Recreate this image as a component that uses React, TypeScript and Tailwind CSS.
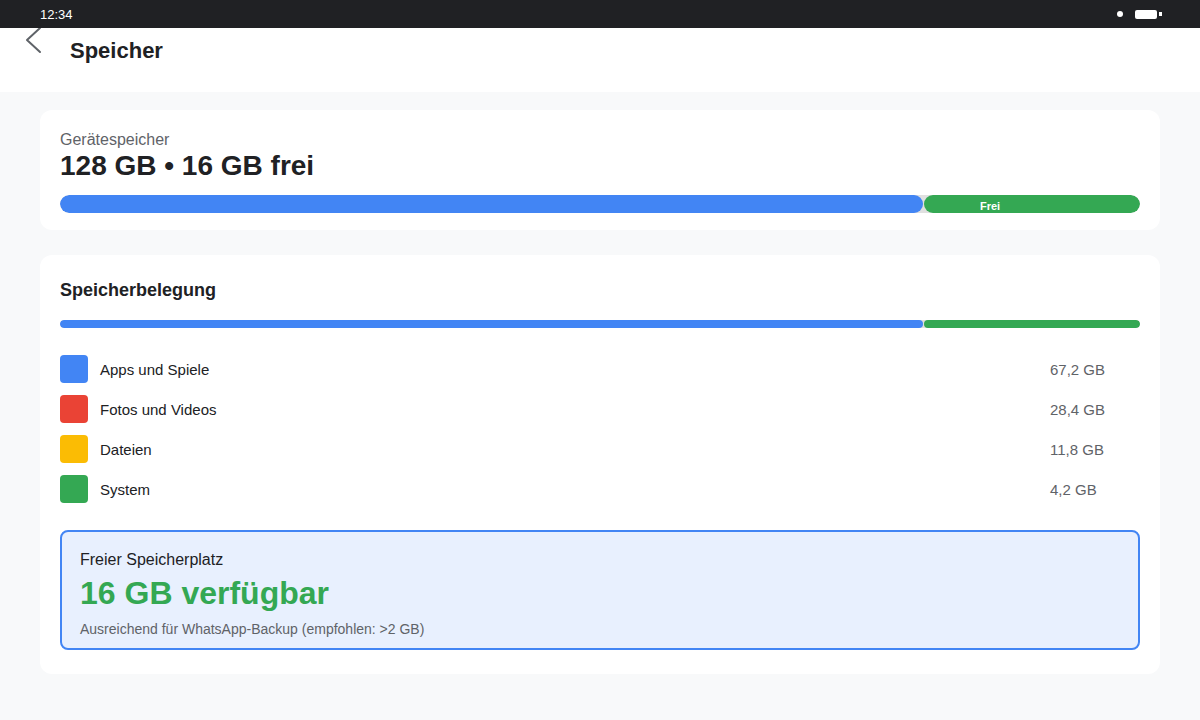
import React from "react";

const rows = [
  { label: "Apps und Spiele", value: "67,2 GB", color: "bg-[#4285f4]" },
  { label: "Fotos und Videos", value: "28,4 GB", color: "bg-[#ea4335]" },
  { label: "Dateien", value: "11,8 GB", color: "bg-[#fbbc04]" },
  { label: "System", value: "4,2 GB", color: "bg-[#34a853]" },
];

export default function App() {
  return (
    <div
      className="w-[1200px] h-[720px] bg-[#f8f9fa] flex flex-col overflow-hidden"
      style={{ fontFamily: '"Liberation Sans", Arial, sans-serif' }}
    >
      {/* status bar */}
      <div className="relative z-10 h-[28px] bg-[#202124] flex items-center pl-[40px] pr-[38px] shrink-0">
        <span className="text-white text-[13px] leading-none">12:34</span>
        <div className="ml-auto flex items-center">
          <div className="w-[6px] h-[6px] rounded-full bg-white" />
          <div className="ml-[12px] w-[22px] h-[9px] rounded-[2px] bg-white" />
          <div className="ml-[2px] w-[3px] h-[4px] bg-white" />
        </div>
      </div>

      {/* header */}
      <div className="h-[64px] bg-white flex items-start pl-[24px] shrink-0">
        <svg
          width="20"
          height="28"
          viewBox="0 0 20 28"
          className="mt-[-2px] shrink-0"
          fill="none"
          stroke="#5f6368"
          strokeWidth="2"
          strokeLinecap="round"
          strokeLinejoin="round"
        >
          <polyline points="16,2 3,14 16,26" />
        </svg>
        <h1 className="ml-[26px] mt-[9px] text-[22px] leading-[28px] font-bold text-[#202124]">
          Speicher
        </h1>
      </div>

      <div className="flex flex-col px-[40px] pt-[18px] gap-[25px]">
        {/* card 1 */}
        <div className="bg-white rounded-[12px] px-5 pt-5 pb-[17px]">
          <div className="text-[16px] leading-[20px] text-[#5f6368]">Gerätespeicher</div>
          <div className="text-[28px] leading-[32px] font-bold text-[#202124]">
            128 GB • 16 GB frei
          </div>
          <div className="mt-[13px] h-[18px] rounded-full bg-[#e0e0e0] flex overflow-hidden">
            <div className="w-[863px] h-full rounded-full bg-[#4285f4]" />
            <div className="ml-[1px] flex-1 h-full rounded-full bg-[#34a853] flex items-start pl-[56px] pt-[6px]">
              <span className="text-white text-[11px] font-bold leading-none">Frei</span>
            </div>
          </div>
        </div>

        {/* card 2 */}
        <div className="bg-white rounded-[12px] px-5 pt-[23px] pb-[24px]">
          <div className="text-[18px] leading-[24px] font-bold text-[#202124]">Speicherbelegung</div>
          <div className="mt-[18px] h-[8px] rounded-full bg-[#e0e0e0] flex overflow-hidden">
            <div className="w-[863px] h-full rounded-full bg-[#4285f4]" />
            <div className="ml-[1px] flex-1 h-full rounded-full bg-[#34a853]" />
          </div>
          <div className="mt-[27px] flex flex-col gap-[12px]">
            {rows.map((r) => (
              <div key={r.label} className="flex items-center h-[28px]">
                <div className={`w-[28px] h-[28px] rounded-[4px] ${r.color}`} />
                <span className="ml-[12px] pt-[2px] text-[15px] text-[#202124]">{r.label}</span>
                <span className="ml-auto pt-[2px] w-[90px] text-[15px] text-[#5f6368]">{r.value}</span>
              </div>
            ))}
          </div>
          <div className="mt-[27px] border-2 border-[#4285f4] bg-[#e8f0fe] rounded-[8px] px-[18px] pt-[18px] pb-[10px]">
            <div className="text-[16px] leading-[20px] text-[#202124]">Freier Speicherplatz</div>
            <div className="mt-[4px] text-[32px] leading-[38px] font-bold text-[#34a853]">
              16 GB verfügbar
            </div>
            <div className="mt-[8px] text-[14px] leading-[18px] text-[#5f6368]">
              Ausreichend für WhatsApp-Backup (empfohlen: &gt;2 GB)
            </div>
          </div>
        </div>
      </div>
    </div>
  );
}
